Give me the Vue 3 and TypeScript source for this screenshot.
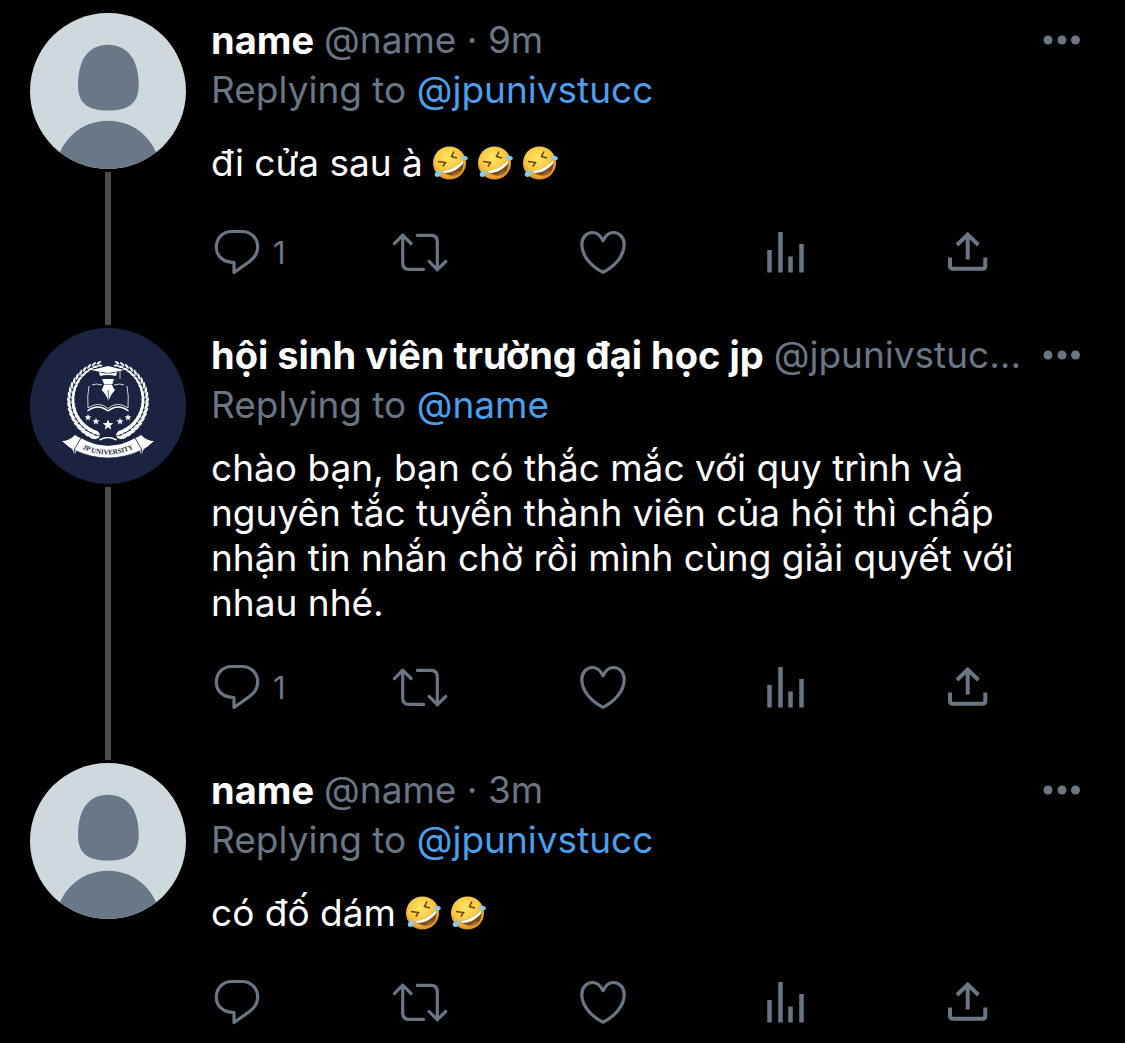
<script setup lang="ts">
interface Post {
  id: number
  name: string
  handle: string
  time?: string
  replyTo: string
  text: string
  emojis: number
  replies?: number
  avatar: 'blank' | 'crest'
}

const posts: Post[] = [
  { id: 1, name: 'name', handle: '@name', time: '9m', replyTo: '@jpunivstucc', text: 'đi cửa sau à', emojis: 3, replies: 1, avatar: 'blank' },
  {
    id: 2,
    name: 'hội sinh viên trường đại học jp',
    handle: '@jpunivstuc...',
    replyTo: '@name',
    text: 'chào bạn, bạn có thắc mắc với quy trình và nguyên tắc tuyển thành viên của hội thì chấp nhận tin nhắn chờ rồi mình cùng giải quyết với nhau nhé.',
    emojis: 0,
    replies: 1,
    avatar: 'crest',
  },
  { id: 3, name: 'name', handle: '@name', time: '3m', replyTo: '@jpunivstucc', text: 'có đố dám', emojis: 2, avatar: 'blank' },
]

const actions = ['Reply', 'Retweet', 'Like', 'Analytics', 'Share']

// Leaves of the left half of the laurel, from the top tip down to the stem.
const leaves = Array.from({ length: 20 }, (_, i) => {
  const t = i / 19
  const deg = 254 - t * 148
  const a = (deg * Math.PI) / 180
  return {
    x: 78 + 37 * Math.cos(a),
    y: 72 + 37 * Math.sin(a),
    rot: deg + 90,
    size: 0.85 + t * 0.6,
  }
})

const stars = [
  { x: 58, y: 89.5, r: 3.6 },
  { x: 66, y: 93.5, r: 3.8 },
  { x: 78, y: 97, r: 5.6 },
  { x: 90, y: 93.5, r: 3.8 },
  { x: 98, y: 89.5, r: 3.6 },
]

function starPoints(cx: number, cy: number, r: number): string {
  return Array.from({ length: 10 }, (_, i) => {
    const a = (i * Math.PI) / 5 - Math.PI / 2
    const d = i % 2 ? r * 0.42 : r
    return `${(cx + d * Math.cos(a)).toFixed(2)},${(cy + d * Math.sin(a)).toFixed(2)}`
  }).join(' ')
}
</script>

<template>
  <main class="thread">
    <article v-for="(post, index) in posts" :key="post.id" class="post">
      <div class="rail">
        <svg v-if="post.avatar === 'blank'" class="avatar" viewBox="0 0 156 156" role="img" aria-label="Default avatar">
          <clipPath :id="`round-${post.id}`"><circle cx="78" cy="78" r="78" /></clipPath>
          <g :clip-path="`url(#round-${post.id})`">
            <rect width="156" height="156" fill="#cfd9dd" />
            <path d="M78 31.7C97 31.7 108.7 46 108.7 72C108.7 90 99 97.5 78 97.5C57 97.5 48 90 48 72C48 46 59 31.7 78 31.7Z" fill="#697786" />
            <ellipse cx="78" cy="159" rx="52" ry="51.3" fill="#697786" />
          </g>
        </svg>
        <svg v-else class="avatar" viewBox="0 0 156 156" role="img" aria-label="JP University crest">
          <circle cx="78" cy="78" r="78" fill="#1b2340" />
          <g v-for="side in [1, -1]" :key="side" :transform="side === 1 ? '' : 'translate(156 0) scale(-1 1)'" fill="#fff">
            <g v-for="(leaf, i) in leaves" :key="i" :transform="`translate(${leaf.x} ${leaf.y}) rotate(${leaf.rot}) scale(${leaf.size})`">
              <path d="M-1.500 0.300C-0.500 3 2.200 3.600 5 2.900C4.300 1.200 2 0-1.500 0.300Z" />
              <path d="M-1.500-0.300C-0.500-3 2.200-3.600 5-2.900C4.300-1.200 2 0-1.500-0.300Z" />
            </g>
            <path d="M69 112Q76 107 86 112" fill="none" stroke="#fff" stroke-width="1" />
            <path d="M32 113Q39 113 45 107L48 109L54 111L46 124L44 127Q44 121 39 119Z" />
            <path d="M51 110L45 122L44 127" fill="none" stroke="#1b2340" stroke-width="0.9" />
            <path d="M78 80.500Q69 72.500 58 80Q57 68 59 58M62 57Q66 55 72 57" fill="none" stroke="#fff" stroke-width="0.8" />
            <path d="M78 83Q68 75 57.500 83" fill="none" stroke="#fff" stroke-width="1.300" />
          </g>
          <g fill="#fff">
            <path d="M61 42Q70 40 78 38Q86 40 94 42Q86 44 78 45Q70 44 61 42Z" />
            <path d="M69 44Q78 47 87 44L86 48Q78 46 70 48Z" />
            <path d="M90 42V51" stroke="#fff" stroke-width="0.700" />
            <path d="M72 51H84L82.500 56H74Z" />
            <path d="M74 56.500H82Q83 60 85 62Q81 66 78.300 73Q76 66 71.500 62Q73 60 74 56.500Z" />
            <path d="M78.300 62V73" stroke="#1b2340" stroke-width="0.700" />
            <polygon v-for="s in stars" :key="s.x" :points="starPoints(s.x, s.y, s.r)" />
            <path d="M51 110Q78 125 105 110L112 122Q78 138 44 122Z" stroke="#1b2340" stroke-width="0.700" />
          </g>
          <path id="ribbon-line" d="M49 119Q78 134 107 119" fill="none" />
          <text class="ribbon-text" fill="#1b2340">
            <textPath href="#ribbon-line" startOffset="50%" text-anchor="middle">JP UNIVERSITY</textPath>
          </text>
        </svg>
        <span v-if="index < posts.length - 1" class="connector"></span>
      </div>

      <div class="content">
        <header class="head">
          <strong class="name">{{ post.name }}</strong>
          <span class="meta">{{ post.handle }}<template v-if="post.time"> · {{ post.time }}</template></span>
          <button class="more" type="button" aria-label="More">
            <svg viewBox="0 0 38 10" width="38" height="10" fill="currentColor">
              <circle cx="5" cy="5" r="4.500" />
              <circle cx="19" cy="5" r="4.500" />
              <circle cx="32.500" cy="5" r="4.500" />
            </svg>
          </button>
        </header>
        <p class="replying">Replying to <a href="#">{{ post.replyTo }}</a></p>
        <p class="body" :class="{ 'body-emoji': post.emojis }">
          {{ post.text }}
          <span v-if="post.emojis" class="emojis">
            <svg v-for="n in post.emojis" :key="n" class="emoji" viewBox="0 0 36 36" role="img" aria-label="🤣">
              <defs>
                <radialGradient :id="`face-${post.id}-${n}`" cx="0.45" cy="0.35" r="0.65">
                  <stop offset="0" stop-color="#ffe766" />
                  <stop offset="0.6" stop-color="#f9c73f" />
                  <stop offset="1" stop-color="#dd8e2a" />
                </radialGradient>
              </defs>
              <circle cx="17.500" cy="18" r="16.500" :fill="`url(#face-${post.id}-${n})`" />
              <path d="M6 16.500L13.500 17.500L10.800 21.500" fill="none" stroke="#6b3d0c" stroke-width="1.500" />
              <path d="M22 6.500L19.500 11.500L25 13" fill="none" stroke="#6b3d0c" stroke-width="1.500" />
              <path d="M10 26C19 25 26 21 31 15C32.500 21 30.500 27 25.500 29.500C20 32 13.500 30 10 26Z" fill="#7c4a16" />
              <path d="M10 26C19 25 26 21 31 15L31.300 18C27 24 20 28 12.500 28Z" fill="#fff" />
              <path d="M20 30.500Q23 26.500 29 25.500Q26.500 30.500 20 30.500Z" fill="#a8662c" />
              <path d="M10 26C7 25 2.500 27 2.700 29.500C3 33 8 32.500 8.500 30Q8.700 28 10 26Z" fill="#8acaf0" />
              <path d="M28.500 12.500C31 9.500 36 11 35.800 13.500C35.500 16 31.500 16 28.500 12.500Z" fill="#8acaf0" />
            </svg>
          </span>
        </p>
        <div class="actions">
          <button v-for="action in actions" :key="action" class="action" type="button" :aria-label="action">
            <svg class="icon" viewBox="0 0 52 48" fill="none" stroke="currentColor" stroke-width="3.200" stroke-linecap="round" stroke-linejoin="round">
              <path v-if="action === 'Reply'" d="M23 34.500C12.500 34.500 5.300 28.500 5.300 19C5.300 10 12 3.500 20.500 3.500H31C40 3.500 46.700 10 46.700 19C46.700 25 43.800 29.500 38.500 33.500L23 44.500V34.500Z" />
              <template v-else-if="action === 'Retweet'">
                <path d="M0.500 15.500L8.700 7.200L17 15.500M8.700 7.200V35Q8.700 41.400 15 41.400H29.500" />
                <path d="M23.300 7.300H37Q43.300 7.300 43.300 13.500V42M35.200 33.500L43.300 41.700L51.800 33.500" />
              </template>
              <path v-else-if="action === 'Like'" d="M26 12.700C23.500 7.500 19.500 4.500 15.500 4.500C9.500 4.500 4.800 9.500 4.800 16.500C4.800 29 16 39.500 26 44.200C36 39.500 47.200 29 47.200 16.500C47.200 9.500 42.500 4.500 36.500 4.500C32.500 4.500 28.500 7.500 26 12.700Z" />
              <path v-else-if="action === 'Analytics'" d="M10.500 22V44.500M21.500 4V44.500M31.500 28.500V44.500M42.500 16V44.500" stroke-width="4.500" stroke-linecap="butt" />
              <path v-else d="M25.700 6.500V31.500M15 17L25.700 6.500L36.400 17M8 29.500V38Q8 40.800 11 40.800H40.500Q43.300 40.800 43.300 38V29.500" stroke-width="4" stroke-linecap="butt" stroke-linejoin="miter" />
            </svg>
            <span v-if="action === 'Reply' && post.replies" class="count">{{ post.replies }}</span>
          </button>
        </div>
      </div>
    </article>
  </main>
</template>

<style>
body {
  margin: 0;
  background: #000;
}
</style>

<style scoped>
.thread {
  padding: 13px 44px 0 30px;
  background: #000;
  color: #fff;
  font-family: Inter, "Liberation Sans", sans-serif;
  font-size: 37px;
}

.post {
  display: flex;
  gap: 25px;
}

.rail {
  display: flex;
  flex: none;
  flex-direction: column;
  align-items: center;
  width: 156px;
}

.avatar {
  display: block;
  width: 156px;
  height: 156px;
}

.connector {
  flex: 1;
  width: 6px;
  margin: 3px 0;
  background: #4b4b4b;
}

.ribbon-text {
  font: bold 7px "Liberation Serif", serif;
}

.content {
  flex: 1;
  min-width: 0;
  padding: 2px 0 52px;
}

.post:last-child .content {
  padding-bottom: 16px;
}

.head {
  display: flex;
  align-items: center;
  gap: 10px;
  height: 50px;
  line-height: 50px;
  white-space: nowrap;
}

.name {
  font-size: 38px;
  font-weight: 700;
}

.meta {
  flex: 1;
  min-width: 0;
  overflow: hidden;
  color: #6b7684;
}

.more,
.action {
  padding: 0;
  border: 0;
  background: none;
  color: #6b7684;
  font: inherit;
  cursor: pointer;
}

.more {
  display: flex;
}

.replying {
  margin: 0;
  color: #6b7684;
  line-height: 50px;
}

.replying a {
  color: #4c9feb;
  text-decoration: none;
}

.body {
  margin: 15px 0 38px;
  line-height: 45px;
}

.body-emoji {
  display: flex;
  align-items: center;
  gap: 9px;
  margin: 18px 0 35px;
  line-height: 60px;
}

.emojis {
  display: flex;
  gap: 9px;
}

.emoji {
  width: 36px;
  height: 36px;
}

.actions {
  display: grid;
  grid-template-columns: repeat(4, 1fr) 52px;
  width: 90%;
}

.action {
  display: flex;
  align-items: center;
  gap: 10px;
  height: 48px;
}

.icon {
  flex: none;
  width: 52px;
  height: 48px;
  overflow: visible;
}

.count {
  font-size: 31px;
  font-weight: 400;
}
</style>
